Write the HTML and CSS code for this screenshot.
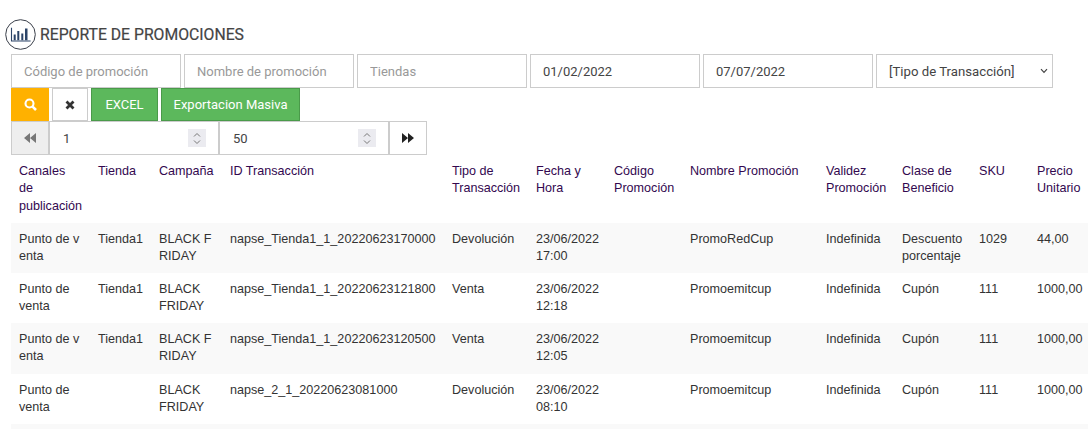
FILE: index.html
```html
<!DOCTYPE html>
<html lang="es">
<head>
    <meta charset="UTF-8">
    <title>Reporte de promociones</title>
    <link rel="stylesheet" href="styles.css">
</head>
<body>
    <div class="title-row">
        <span class="title-icon">
            <svg width="31" height="31" viewBox="0 0 31 31">
                <circle cx="15.5" cy="15.5" r="14.8" fill="none" stroke="#3a3f4a" stroke-width="1"/>
                <path d="M6.5 8.7V22H25.6" fill="none" stroke="#2c4468" stroke-width="1.1"/>
                <path d="M8.7 15.5h2v5.7h-2zM12.3 12h2v9.2h-2zM16.3 14.5h2v6.7h-2zM20 9.5h2.5v11.7H20z" fill="#2c4468"/>
            </svg>
        </span>
        <h1>REPORTE DE PROMOCIONES</h1>
    </div>

    <div class="filters">
        <input type="text" placeholder="Código de promoción">
        <input type="text" placeholder="Nombre de promoción">
        <input type="text" placeholder="Tiendas">
        <input type="text" value="01/02/2022">
        <input type="text" value="07/07/2022">
        <div class="select-wrap">
            <select>
                <option>[Tipo de Transacción]</option>
            </select>
            <svg class="select-arrow" width="8" height="6" viewBox="0 0 8 6">
                <path d="M1 1.2L4 4.4L7 1.2" fill="none" stroke="#444" stroke-width="1.2"/>
            </svg>
        </div>
    </div>

    <div class="actions">
        <button class="btn btn-search">
            <svg width="13" height="13" viewBox="0 0 13 13">
                <circle cx="5.5" cy="5.5" r="4" fill="none" stroke="#fff" stroke-width="2.1"/>
                <path d="M8.6 8.6L12 12" stroke="#fff" stroke-width="2.6"/>
            </svg>
        </button>
        <button class="btn btn-clear">
            <svg width="10" height="10" viewBox="0 0 10 10">
                <path d="M1.5 1.5L8.5 8.5M8.5 1.5L1.5 8.5" stroke="#333" stroke-width="2.8"/>
            </svg>
        </button>
        <button class="btn btn-green btn-excel">EXCEL</button>
        <button class="btn btn-green btn-export">Exportacion Masiva</button>
    </div>

    <div class="pager">
        <button class="page-btn page-prev">
            <svg width="12" height="10" viewBox="0 0 12 10">
                <path d="M6 0V10L0 5zM12 0V10L6 5z" fill="#777"/>
            </svg>
        </button>
        <div class="page-input">
            <span>1</span>
            <span class="spin">
                <svg width="8" height="13" viewBox="0 0 8 13">
                    <path d="M1 4.5L4 1.5L7 4.5M1 8.5L4 11.5L7 8.5" fill="none" stroke="#777" stroke-width="1"/>
                </svg>
            </span>
        </div>
        <div class="page-input">
            <span>50</span>
            <span class="spin">
                <svg width="8" height="13" viewBox="0 0 8 13">
                    <path d="M1 4.5L4 1.5L7 4.5M1 8.5L4 11.5L7 8.5" fill="none" stroke="#777" stroke-width="1"/>
                </svg>
            </span>
        </div>
        <button class="page-btn page-next">
            <svg width="12" height="10" viewBox="0 0 12 10">
                <path d="M0 0V10L6 5zM6 0V10L12 5z" fill="#222"/>
            </svg>
        </button>
    </div>

    <table>
        <colgroup>
            <col class="c1"><col class="c2"><col class="c3"><col class="c4"><col class="c5"><col class="c6">
            <col class="c7"><col class="c8"><col class="c9"><col class="c10"><col class="c11"><col class="c12">
        </colgroup>
        <thead>
            <tr>
                <th>Canales<br>de<br>publicación</th>
                <th>Tienda</th>
                <th>Campaña</th>
                <th>ID Transacción</th>
                <th>Tipo de Transacción</th>
                <th>Fecha y Hora</th>
                <th>Código Promoción</th>
                <th>Nombre Promoción</th>
                <th>Validez Promoción</th>
                <th>Clase de Beneficio</th>
                <th>SKU</th>
                <th>Precio Unitario</th>
            </tr>
        </thead>
        <tbody>
            <tr>
                <td class="brk">Punto de venta</td>
                <td>Tienda1</td>
                <td class="brk">BLACK FRIDAY</td>
                <td>napse_Tienda1_1_20220623170000</td>
                <td>Devolución</td>
                <td>23/06/2022 17:00</td>
                <td></td>
                <td>PromoRedCup</td>
                <td>Indefinida</td>
                <td>Descuento porcentaje</td>
                <td>1029</td>
                <td>44,00</td>
            </tr>
            <tr>
                <td>Punto de venta</td>
                <td>Tienda1</td>
                <td>BLACK FRIDAY</td>
                <td>napse_Tienda1_1_20220623121800</td>
                <td>Venta</td>
                <td>23/06/2022 12:18</td>
                <td></td>
                <td>Promoemitcup</td>
                <td>Indefinida</td>
                <td>Cupón</td>
                <td>111</td>
                <td>1000,00</td>
            </tr>
            <tr>
                <td class="brk">Punto de venta</td>
                <td>Tienda1</td>
                <td class="brk">BLACK FRIDAY</td>
                <td>napse_Tienda1_1_20220623120500</td>
                <td>Venta</td>
                <td>23/06/2022 12:05</td>
                <td></td>
                <td>Promoemitcup</td>
                <td>Indefinida</td>
                <td>Cupón</td>
                <td>111</td>
                <td>1000,00</td>
            </tr>
            <tr>
                <td>Punto de venta</td>
                <td></td>
                <td>BLACK FRIDAY</td>
                <td>napse_2_1_20220623081000</td>
                <td>Devolución</td>
                <td>23/06/2022 08:10</td>
                <td></td>
                <td>Promoemitcup</td>
                <td>Indefinida</td>
                <td>Cupón</td>
                <td>111</td>
                <td>1000,00</td>
            </tr>
            <tr class="row-last">
                <td></td><td></td><td></td><td></td><td></td><td></td><td></td><td></td><td></td><td></td><td></td><td></td>
            </tr>
        </tbody>
    </table>
</body>
</html>
```

FILE: styles.css
```css
html, body {
    overflow: hidden;
    height: 429px;
}
body {
    box-sizing: border-box;
    margin: 0;
    padding: 17px 0 0 11px;
    font-family: Roboto, sans-serif;
    font-size: 13px;
    color: #333;
    background: #fff;
}
.title-row {
    box-sizing: border-box;
    display: flex;
    align-items: center;
    height: 37px;
    padding-bottom: 2px;
    margin-left: -6px;
}
.title-icon {
    display: flex;
    width: 35px;
    margin-bottom: 1px;
}
h1 {
    margin: 0;
    font-size: 15.75px;
    font-weight: 400;
    color: #444;
    -webkit-text-stroke: 0.2px #444;
}
.filters {
    display: flex;
    gap: 3px;
    height: 34px;
}
input, select {
    box-sizing: border-box;
    width: 170px;
    height: 34px;
    padding: 0 12px;
    border: 1px solid #ccc;
    border-radius: 0;
    background: #fff;
    font-family: Roboto, sans-serif;
    font-size: 13px;
    color: #444;
    outline: none;
}
input::placeholder {
    color: #999;
}
.select-wrap {
    position: relative;
    width: 177px;
}
select {
    width: 177px;
    padding: 0 12px;
    font-size: 13.2px;
    appearance: none;
}
.select-arrow {
    position: absolute;
    top: 14px;
    right: 5px;
}
.actions {
    display: flex;
    gap: 3px;
    height: 33px;
}
.btn {
    display: flex;
    align-items: center;
    justify-content: center;
    padding: 0;
    border: 1px solid transparent;
    border-radius: 0;
    font-family: Roboto, sans-serif;
    font-size: 13px;
    color: #fff;
}
.btn-search {
    width: 38px;
    background: #ffb100;
}
.btn-clear {
    width: 36px;
    background: #fff;
    border-color: #ccc;
}
.btn-green {
    background: #5cb85c;
    border-color: #4a9a4a;
}
.btn-excel {
    width: 67px;
}
.btn-export {
    width: 139px;
}
.pager {
    display: flex;
    height: 34px;
}
.page-btn {
    display: flex;
    align-items: center;
    justify-content: center;
    box-sizing: border-box;
    width: 38px;
    padding: 0;
    border: 1px solid #ccc;
    border-radius: 0;
}
.page-prev {
    background: #eee;
}
.page-next {
    background: #fff;
}
.page-input {
    display: flex;
    align-items: center;
    justify-content: space-between;
    box-sizing: border-box;
    width: 170px;
    padding: 0 12px 0 13px;
    border: 1px solid #ccc;
    color: #444;
}
.spin {
    display: flex;
    align-items: center;
    justify-content: center;
    width: 18px;
    height: 18px;
    background: #ebebf0;
}
table {
    table-layout: fixed;
    width: 1100px;
    margin-top: 0.3px;
    border-collapse: collapse;
    font-family: "Liberation Sans", Arial, sans-serif;
    font-size: 12.6px;
    line-height: 17.14px;
    color: #333;
}
.c1 { width: 79px; }
.c2 { width: 61px; }
.c3 { width: 71px; }
.c4 { width: 222px; }
.c5 { width: 84px; }
.c6 { width: 78px; }
.c7 { width: 76px; }
.c8 { width: 136px; }
.c9 { width: 76px; }
.c10 { width: 77px; }
.c11 { width: 58px; }
.c12 { width: 82px; }
th, td {
    padding: 8px;
    text-align: left;
    vertical-align: top;
}
th {
    font-weight: 400;
    color: #33084f;
}
.brk {
    word-break: break-all;
}
tbody tr:nth-child(odd) {
    background: #f9f9f9;
}
.row-last td {
    height: 34px;
}
```
